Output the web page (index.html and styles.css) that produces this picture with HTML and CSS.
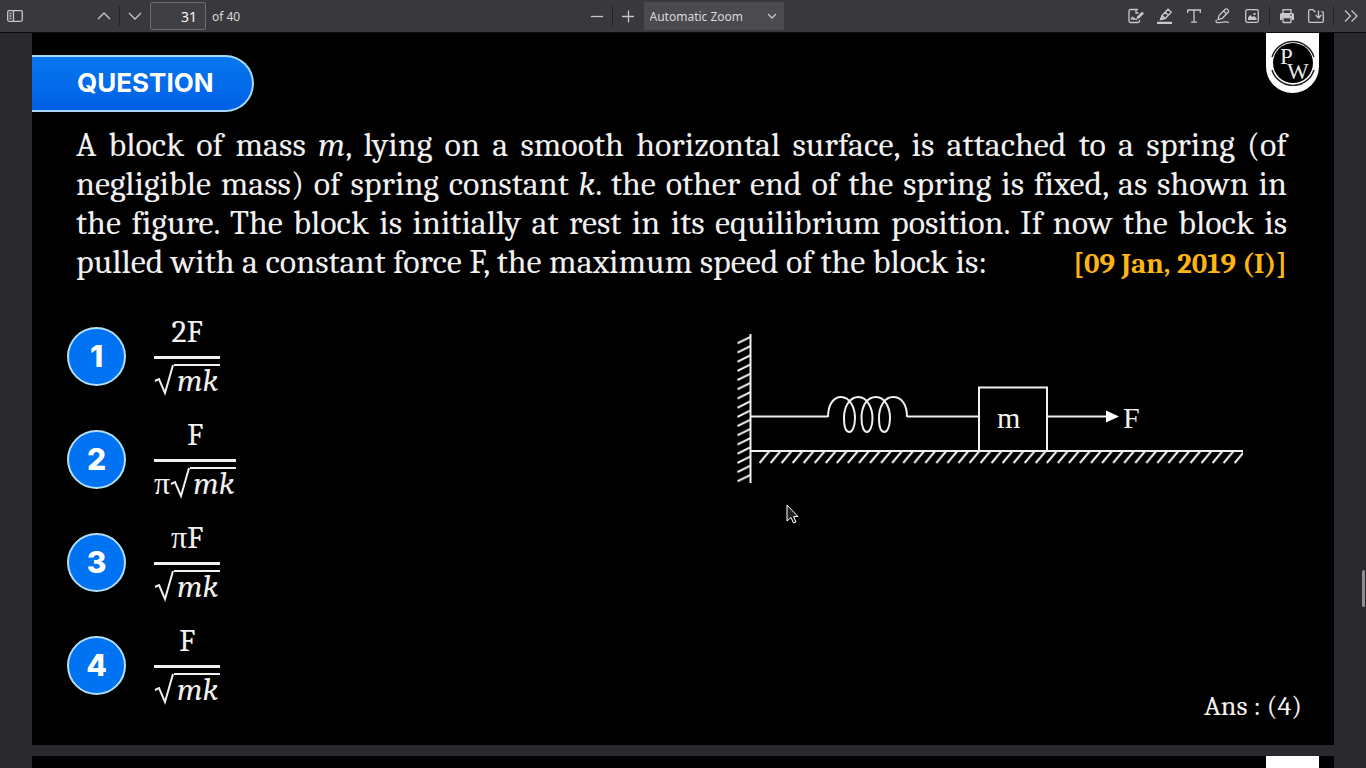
FILE: index.html
```html
<!DOCTYPE html>
<html lang="en">
<head>
<meta charset="utf-8">
<title>Document viewer</title>
<link rel="stylesheet" href="styles.css">
</head>
<body>
<header class="toolbar">
  <div class="group group-left">
    <button class="tool" type="button" aria-label="Toggle sidebar"><svg viewBox="0 0 16 16"><rect x=".7" y="2.7" width="14.6" height="10.6" rx="1.5"/><path d="M6.5 3v10M2.5 5.500h2M2.500 8h2M2.500 10.500h2"/></svg></button>
    <div class="group pager">
      <button class="tool" type="button" aria-label="Previous page"><svg viewBox="0 0 16 16"><path d="M2 11l6-6 6 6"/></svg></button>
      <span class="sep"></span>
      <button class="tool" type="button" aria-label="Next page"><svg viewBox="0 0 16 16"><path d="M2 5l6 6 6-6"/></svg></button>
      <input class="page-number" type="text" value="31" aria-label="Page">
      <span class="page-count">of 40</span>
    </div>
  </div>
  <div class="group">
    <button class="tool" type="button" aria-label="Zoom out"><svg viewBox="0 0 16 16"><path d="M2 8.500h12"/></svg></button>
    <span class="sep"></span>
    <button class="tool" type="button" aria-label="Zoom in"><svg viewBox="0 0 16 16"><path d="M2 8.500h12M8.500 2.500v12"/></svg></button>
    <span class="zoom-box">
      <select class="zoom" aria-label="Zoom"><option>Automatic Zoom</option></select>
      <svg class="zoom-arrow" viewBox="0 0 16 16"><path d="M4 6l4 4 4-4"/></svg>
    </span>
  </div>
  <div class="group group-right">
    <button class="tool" type="button" aria-label="Sign"><svg viewBox="0 0 16 16"><path d="M10 1.500H2.500a1.500 1.500 0 0 0-1.500 1.500v10a1.500 1.500 0 0 0 1.500 1.500H10a1.500 1.500 0 0 0 1.500-1.500v-1M8 1.500V5h2.500"/><path d="M3 11.500c1-2 2-3 2-1.500s0 2 1.500.5c.5 1 1 1 2.500 1"/><path class="solid" d="M8.500 11l.7-2.400L14 3.800l2 1.700-5 5z"/></svg></button>
    <button class="tool" type="button" aria-label="Highlight"><svg viewBox="0 0 16 16"><path d="M3.500 11.500L5 7.500l6-6.300 3.300 3.100-6 6-4 1.200zM5 7.500l3.300 3M8.300 4.200l3.200 3"/><path class="solid" d="M0 13.700h15V16H0zM3 12l1.500-3.500L7.500 11z"/></svg></button>
    <button class="tool" type="button" aria-label="Text"><svg viewBox="0 0 16 16"><path d="M1.700 5V2h12.600v3M8 2v12M5 14.200h6"/></svg></button>
    <button class="tool" type="button" aria-label="Draw"><svg viewBox="0 0 16 16"><path d="M3 11.500L4.200 7.300l6-6a1.500 1.500 0 0 1 2 0l1 1a1.500 1.500 0 0 1 0 2l-6 6L3 11.500zM8.700 3l3 3M1.500 12c-2 3 2 3 6 2.200 3-.7 4.500-.7 6.500.3"/></svg></button>
    <button class="tool" type="button" aria-label="Add image"><svg viewBox="0 0 16 16"><rect x="1.700" y="1.700" width="12.600" height="12.600" rx="1.500"/><path class="solid" d="M4 12V9.500L6.300 7l2 2L10 8l2.500 2v2zM9.500 5h2v2h-2z"/></svg></button>
    <span class="sep"></span>
    <button class="tool" type="button" aria-label="Print"><svg viewBox="0 0 16 16"><rect x="4" y="1.700" width="8" height="4"/><path class="solid" fill-rule="evenodd" d="M2.500 5h11A1.500 1.500 0 0 1 15 6.500V12h-2.500V9.500h-9V12H1V6.500A1.500 1.500 0 0 1 2.500 5zm8.500 1.300v1.200h2V6.300z"/><rect x="4" y="9.500" width="8" height="5" rx=".5"/></svg></button>
    <button class="tool" type="button" aria-label="Save"><svg viewBox="0 0 16 16"><path d="M7.500 3.500h-1L5 1.700H2A1.300 1.300 0 0 0 .7 3v10A1.300 1.300 0 0 0 2 14.300h12a1.300 1.300 0 0 0 1.300-1.300V5A1.300 1.300 0 0 0 14 3.700h-.7M10.500 2.500v7M7.700 7l2.800 3 2.800-3"/></svg></button>
    <span class="sep"></span>
    <button class="tool" type="button" aria-label="More tools"><svg viewBox="0 0 16 16"><path d="M2 2.500L7.500 8 2 13.500M8.500 2.500L14 8l-5.500 5.500"/></svg></button>
  </div>
</header>

<main class="viewer">
  <article class="page">
    <div class="page-head">
      <h1 class="pill">QUESTION</h1>
      <div class="badge">
        <svg class="logo" viewBox="0 0 46 46" role="img" aria-label="PW">
          <circle cx="23" cy="23" r="20" fill="#000"/>
          <path d="M2 17a22 22 0 0 1 42 0M2 30a22 22 0 0 0 42 0" fill="none" stroke="#222" stroke-width="1.500"/>
          <text class="logo-text"><tspan x="10" y="24">P</tspan><tspan x="17" y="39">W</tspan></text>
        </svg>
      </div>
    </div>

    <div class="question">
      <div class="line">A block of mass <i>m</i>, lying on a smooth horizontal surface, is attached to a spring (of</div>
      <div class="line">negligible mass) of spring constant <i>k</i>. the other end of the spring is fixed, as shown in</div>
      <div class="line">the figure. The block is initially at rest in its equilibrium position. If now the block is</div>
      <div class="last-line"><span>pulled with a constant force F, the maximum speed of the block is:</span><b class="source">[09 Jan, 2019 (I)]</b></div>
    </div>

    <div class="answers">
      <ol class="options">
        <li class="option"><span class="number">1</span><span class="fraction"><span class="top">2F</span><span class="bottom"><svg class="radical" viewBox="0 0 20 32"><path d="M1 17l4-2 6 14L19 1"/></svg><i class="radicand">mk</i></span></span></li>
        <li class="option"><span class="number">2</span><span class="fraction"><span class="top">F</span><span class="bottom"><span class="factor">π</span><svg class="radical" viewBox="0 0 20 32"><path d="M1 17l4-2 6 14L19 1"/></svg><i class="radicand">mk</i></span></span></li>
        <li class="option"><span class="number">3</span><span class="fraction"><span class="top">πF</span><span class="bottom"><svg class="radical" viewBox="0 0 20 32"><path d="M1 17l4-2 6 14L19 1"/></svg><i class="radicand">mk</i></span></span></li>
        <li class="option"><span class="number">4</span><span class="fraction"><span class="top">F</span><span class="bottom"><svg class="radical" viewBox="0 0 20 32"><path d="M1 17l4-2 6 14L19 1"/></svg><i class="radicand">mk</i></span></span></li>
      </ol>
      <div class="side">
        <svg class="figure" viewBox="736 333 508 152" role="img" aria-label="Block on a surface attached to a wall by a spring">
          <defs>
            <pattern id="wall" x="736" y="335" width="16" height="9.200" patternUnits="userSpaceOnUse"><path d="M1.500 8.200L15 1.700M1.500 -1L15 -7.500M1.500 17.400L15 10.900"/></pattern>
            <pattern id="ground" x="759" y="450" width="11.050" height="15" patternUnits="userSpaceOnUse"><path d="M.5 13L10.500 1M-10.550 13L-.55 1M11.550 13L21.550 1"/></pattern>
          </defs>
          <rect x="736" y="335" width="14" height="148" fill="url(#wall)" stroke="none"/>
          <rect x="759" y="450" width="484" height="15" fill="url(#ground)" stroke="none"/>
          <path d="M750.500 334v149M750 451h493M751 416.500h77M907 416.500h72M979 451v-63.500h68V451M1047 416.500h60"/>
          <path d="M828 417C828 404 834 397 841 397C850 397 855 408 855 418C855 427 852 432 849.500 432C846 432 844 427 844 418C844 406 850 397 858.500 397C867 397 872.500 408 872.500 418C872.500 427 869.500 432 867 432C864 432 861.500 427 861.500 418C861.500 406 867 397 876 397C885 397 890 408 890 418C890 427 887 432 884.500 432C881 432 879 427 879 418C879 406 885 397 893 397C902 397 907 405 907 417"/>
          <path d="M1106 410.500l13 6-13 6z" fill="#fff" stroke="none"/>
          <text class="figure-text" x="997" y="428">m</text>
          <text class="figure-text" x="1123" y="428">F</text>
        </svg>
        <p class="answer">Ans : (4)</p>
      </div>
    </div>
    <svg class="cursor" viewBox="0 0 14 20"><path d="M1 1v16l4-3.500L7.500 19l2.500-1-2.300-5.500H12z"/></svg>
  </article>
  <article class="page page-next"><div class="page-head"><div class="badge"></div></div></article>
  <div class="scroll-thumb"></div>
</main>
</body>
</html>
```
FILE: styles.css
```css
* { box-sizing: border-box; }
body {
  margin: 0;
  height: 100vh;
  display: flex;
  flex-direction: column;
  overflow: hidden;
  background: #2a2a2e;
  color: #f0f0f0;
  font-family: Cambria, "Liberation Serif", serif;
}
.toolbar {
  flex: none;
  display: grid;
  grid-template-columns: 1fr auto 1fr;
  height: 33px;
  padding: 0 1px;
  background: #38383d;
  border-bottom: 1px solid #0c0c0d;
  font-family: "Noto Sans", sans-serif;
}
.group { display: flex; align-items: center; gap: 1px; }
.group-right { justify-content: flex-end; }
.pager { margin-left: 60px; }
.tool {
  width: 28px;
  height: 28px;
  padding: 6px;
  border: 0;
  background: none;
}
.tool svg { display: block; width: 16px; height: 16px; overflow: visible; }
.tool path, .tool rect, .zoom-arrow path {
  fill: none;
  stroke: #c8c8c9;
  stroke-width: 1.3;
}
.tool .solid { fill: #c8c8c9; stroke: none; }
.sep { width: 1px; height: 20px; background: #242428; }
.group-right .sep { margin: 0 2px; }
.page-number {
  width: 56px;
  height: 28px;
  padding: 0 8px;
  border: 1px solid #6b6b70;
  border-radius: 2px;
  background: #404044;
  color: #f9f9fa;
  font: 14px "Noto Sans", sans-serif;
  text-align: right;
}
.page-count { margin-left: 5px; color: #d9d9d9; font-size: 12px; }
.zoom-box { position: relative; width: 140px; margin-left: 1px; }
.zoom {
  display: block;
  width: 100%;
  height: 28px;
  padding: 0 6px;
  border: 0;
  appearance: none;
  background: #4a4a4f;
  color: #d9d9d9;
  font: 12px "Noto Sans", sans-serif;
}
.zoom-arrow { position: absolute; right: 4px; top: 6px; width: 16px; height: 16px; pointer-events: none; }

.viewer {
  position: relative;
  flex: 1;
  min-height: 0;
  overflow: hidden;
  padding: 0 32px;
}
.page { position: relative; padding-bottom: 28px; margin-bottom: 11px; background: #000; }
.page-next { padding-bottom: 600px; }
.page-head { display: flex; align-items: flex-start; height: 60px; }
.pill {
  width: 222px;
  height: 57px;
  margin: 22px 0 0;
  padding-left: 45px;
  border: 2px solid #a6d8f5;
  border-left: 0;
  border-radius: 0 29px 29px 0;
  background: linear-gradient(#0878ee, #005fe6);
  color: #fff;
  font: 700 26px/52px Inter, sans-serif;
}
.badge {
  width: 53px;
  height: 60px;
  margin-left: auto;
  margin-right: 15px;
  padding: 7px 4px 0;
  border-radius: 0 0 27px 27px;
  background: #fff;
}
.logo { display: block; width: 46px; height: 46px; }
.logo-text { fill: #e8e8e8; font: 23px "Liberation Serif", serif; }

.question {
  margin: 33px 47px 0 44px;
  font-size: 34px;
  line-height: 39px;
  white-space: nowrap;
}
.line { text-align-last: justify; }
.last-line { display: flex; justify-content: space-between; }
.source { color: #fdb515; font-size: 29px; line-height: 41px; height: 39px; }

.answers { display: flex; justify-content: space-between; margin: 23px 32px 0 35px; }
.options { margin: 0; padding: 0; list-style: none; }
.option { display: flex; align-items: center; gap: 28px; height: 103px; }
.number {
  width: 59px;
  height: 59px;
  border: 2px solid #b4def7;
  border-radius: 50%;
  background: #0073f2;
  color: #fff;
  font: 800 30px/55px Inter, sans-serif;
  text-align: center;
}
.fraction { display: flex; flex-direction: column; font-size: 32px; line-height: 30px; }
.top { padding-bottom: 9px; border-bottom: 3px solid #f0f0f0; text-align: center; }
.bottom { display: flex; padding-top: 5px; }
.radical { width: 20px; height: 32px; }
.radical path { fill: none; stroke: #f0f0f0; stroke-width: 2; }
.radicand { padding: 0 2px 0 3px; border-top: 2px solid #f0f0f0; }
.factor { padding-top: 2px; }

.side { display: flex; flex-direction: column; justify-content: space-between; align-items: flex-end; }
.figure {
  width: 508px;
  height: 152px;
  margin: 28px 58px 0 0;
  fill: none;
  stroke: #f0f0f0;
  stroke-width: 2;
}
.figure-text { fill: #f0f0f0; stroke: none; font: 30px "Liberation Serif", serif; }
.answer { margin: 0 0 -7px; font-size: 28px; line-height: 36px; }
.cursor { position: absolute; left: 754px; top: 471px; width: 14px; height: 20px; fill: #222; stroke: #fff; }
.scroll-thumb {
  position: absolute;
  right: 1px;
  top: 537px;
  width: 3px;
  height: 37px;
  border-radius: 2px;
  background: #8e8e90;
}
```
